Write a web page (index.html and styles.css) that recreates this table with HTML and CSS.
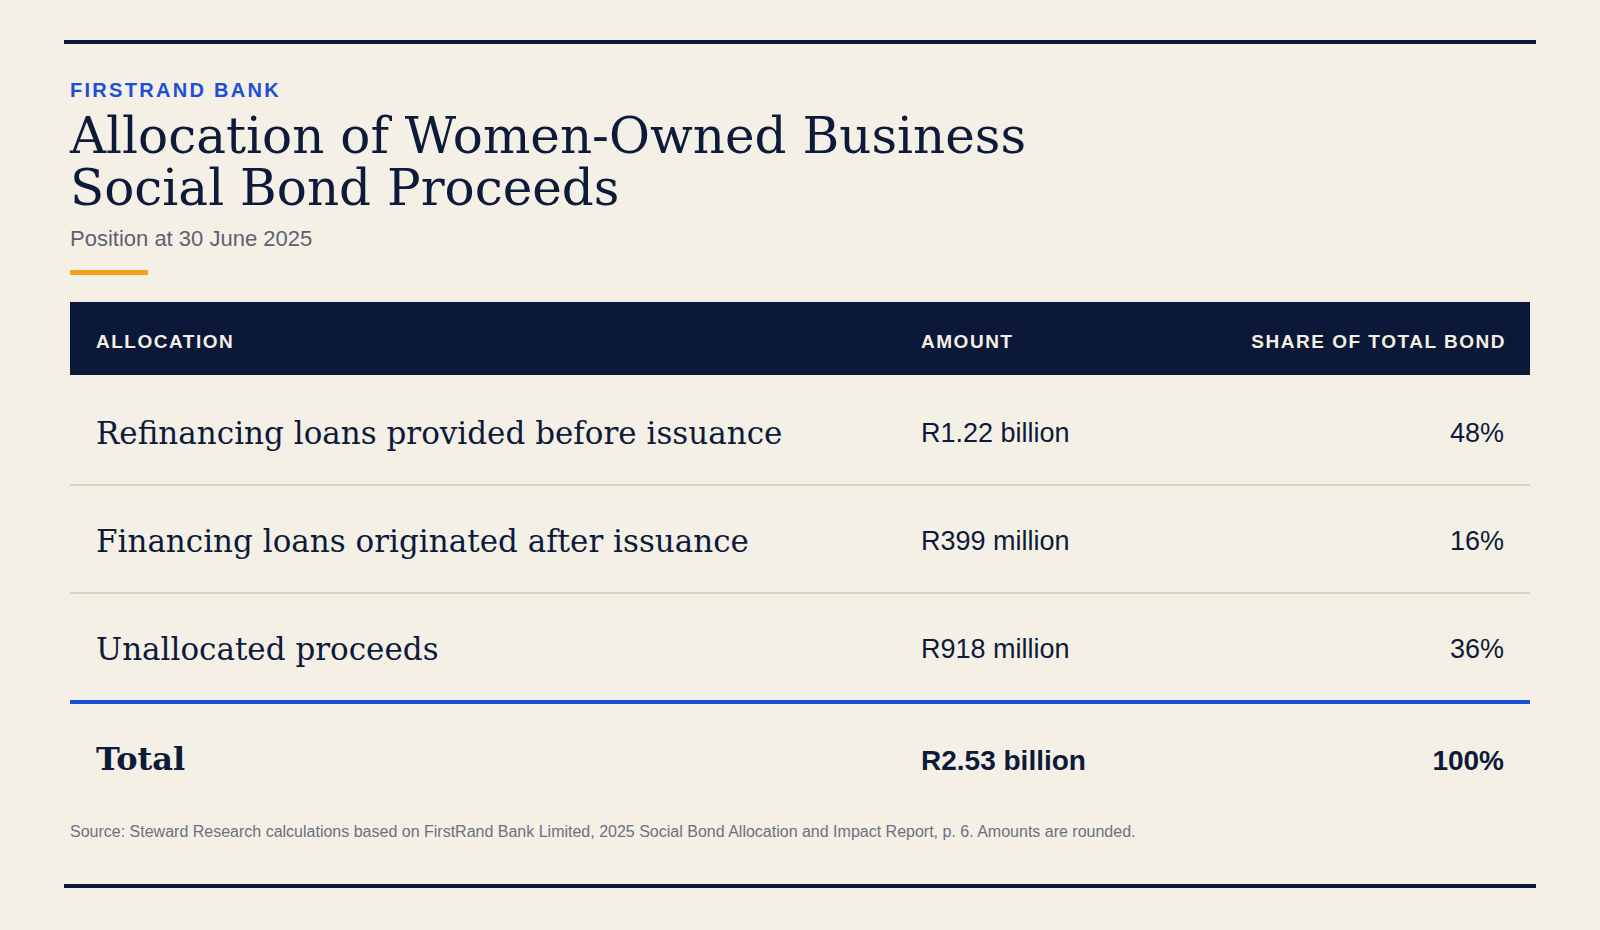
FILE: index.html
```html
<!DOCTYPE html>
<html lang="en">
<head>
<meta charset="utf-8">
<title>Allocation of Women-Owned Business Social Bond Proceeds</title>
<link rel="stylesheet" href="styles.css">
</head>
<body>
<main class="sheet">
  <header class="intro">
    <p class="eyebrow">FIRSTRAND BANK</p>
    <h1 class="title">Allocation of Women-Owned Business<br>Social Bond Proceeds</h1>
    <p class="subtitle">Position at 30 June 2025</p>
    <div class="accent"></div>
  </header>
  <div class="table">
    <div class="row head">
      <div class="cell">ALLOCATION</div>
      <div class="cell">AMOUNT</div>
      <div class="cell right">SHARE OF TOTAL BOND</div>
    </div>
    <div class="row body first">
      <div class="cell name">Refinancing loans provided before issuance</div>
      <div class="cell num">R1.22 billion</div>
      <div class="cell num right">48%</div>
    </div>
    <div class="row body">
      <div class="cell name">Financing loans originated after issuance</div>
      <div class="cell num">R399 million</div>
      <div class="cell num right">16%</div>
    </div>
    <div class="row body last">
      <div class="cell name">Unallocated proceeds</div>
      <div class="cell num">R918 million</div>
      <div class="cell num right">36%</div>
    </div>
    <div class="row total">
      <div class="cell name">Total</div>
      <div class="cell num">R2.53 billion</div>
      <div class="cell num right">100%</div>
    </div>
  </div>
  <p class="source">Source: Steward Research calculations based on FirstRand Bank Limited, 2025 Social Bond Allocation and Impact Report, p. 6. Amounts are rounded.</p>
</main>
</body>
</html>
```

FILE: styles.css
```css
html, body {
  margin: 0;
  padding: 0;
  background: #f4f0e6;
}
body {
  width: 1600px;
  height: 930px;
  overflow: hidden;
  font-family: "Liberation Sans", Arial, sans-serif;
  color: #0d1a3a;
}
.sheet {
  margin: 40px 64px 0;
  border-top: 4px solid #0b1838;
  border-bottom: 4px solid #0b1838;
  padding: 36px 6px 42px;
}
.intro p, .intro h1 { margin: 0; }
.eyebrow {
  font-size: 20px;
  line-height: 20px;
  font-weight: 700;
  letter-spacing: 0.115em;
  color: #1d4ed8;
}
.title {
  margin-top: 10px !important;
  font-family: "DejaVu Serif", serif;
  font-weight: 400;
  font-size: 50px;
  line-height: 52px;
  color: #0d1a3a;
}
.subtitle {
  margin-top: 11px !important;
  font-size: 22px;
  line-height: 28px;
  color: #5d6271;
}
.accent {
  margin-top: 17px;
  width: 78px;
  height: 5px;
  background: #f2a31b;
}
.table {
  margin-top: 27px;
}
.row {
  display: grid;
  grid-template-columns: 825px 1fr 1fr;
  align-items: center;
}
.cell {
  padding: 0 26px;
}
.right { text-align: right; }
.head {
  background: #0b1838;
  color: #f4efe5;
  height: 73px;
  font-size: 19px;
  font-weight: 700;
  letter-spacing: 0.08em;
  padding-top: 6px;
  box-sizing: border-box;
}
.head .right { padding-right: 24px; }
.body {
  height: 108px;
  box-sizing: border-box;
  border-bottom: 2px solid #d9d1c3;
  padding-top: 4px;
}
.body.first { height: 111px; padding-top: 6px; }
.body.last {
  height: 110px;
  border-bottom: 4px solid #1d4ed8;
}
.name {
  font-family: "DejaVu Serif", serif;
  font-size: 31px;
  line-height: 36px;
}
.num {
  font-size: 27px;
  line-height: 32px;
}
.total {
  padding: 37px 0 25px;
  align-items: baseline;
}
.total .name {
  font-weight: 700;
  font-size: 32px;
}
.total .num {
  font-weight: 700;
  font-size: 28px;
}
.source {
  margin: 20px 0 0;
  font-size: 16px;
  line-height: 20px;
  color: #6b7080;
}
```
